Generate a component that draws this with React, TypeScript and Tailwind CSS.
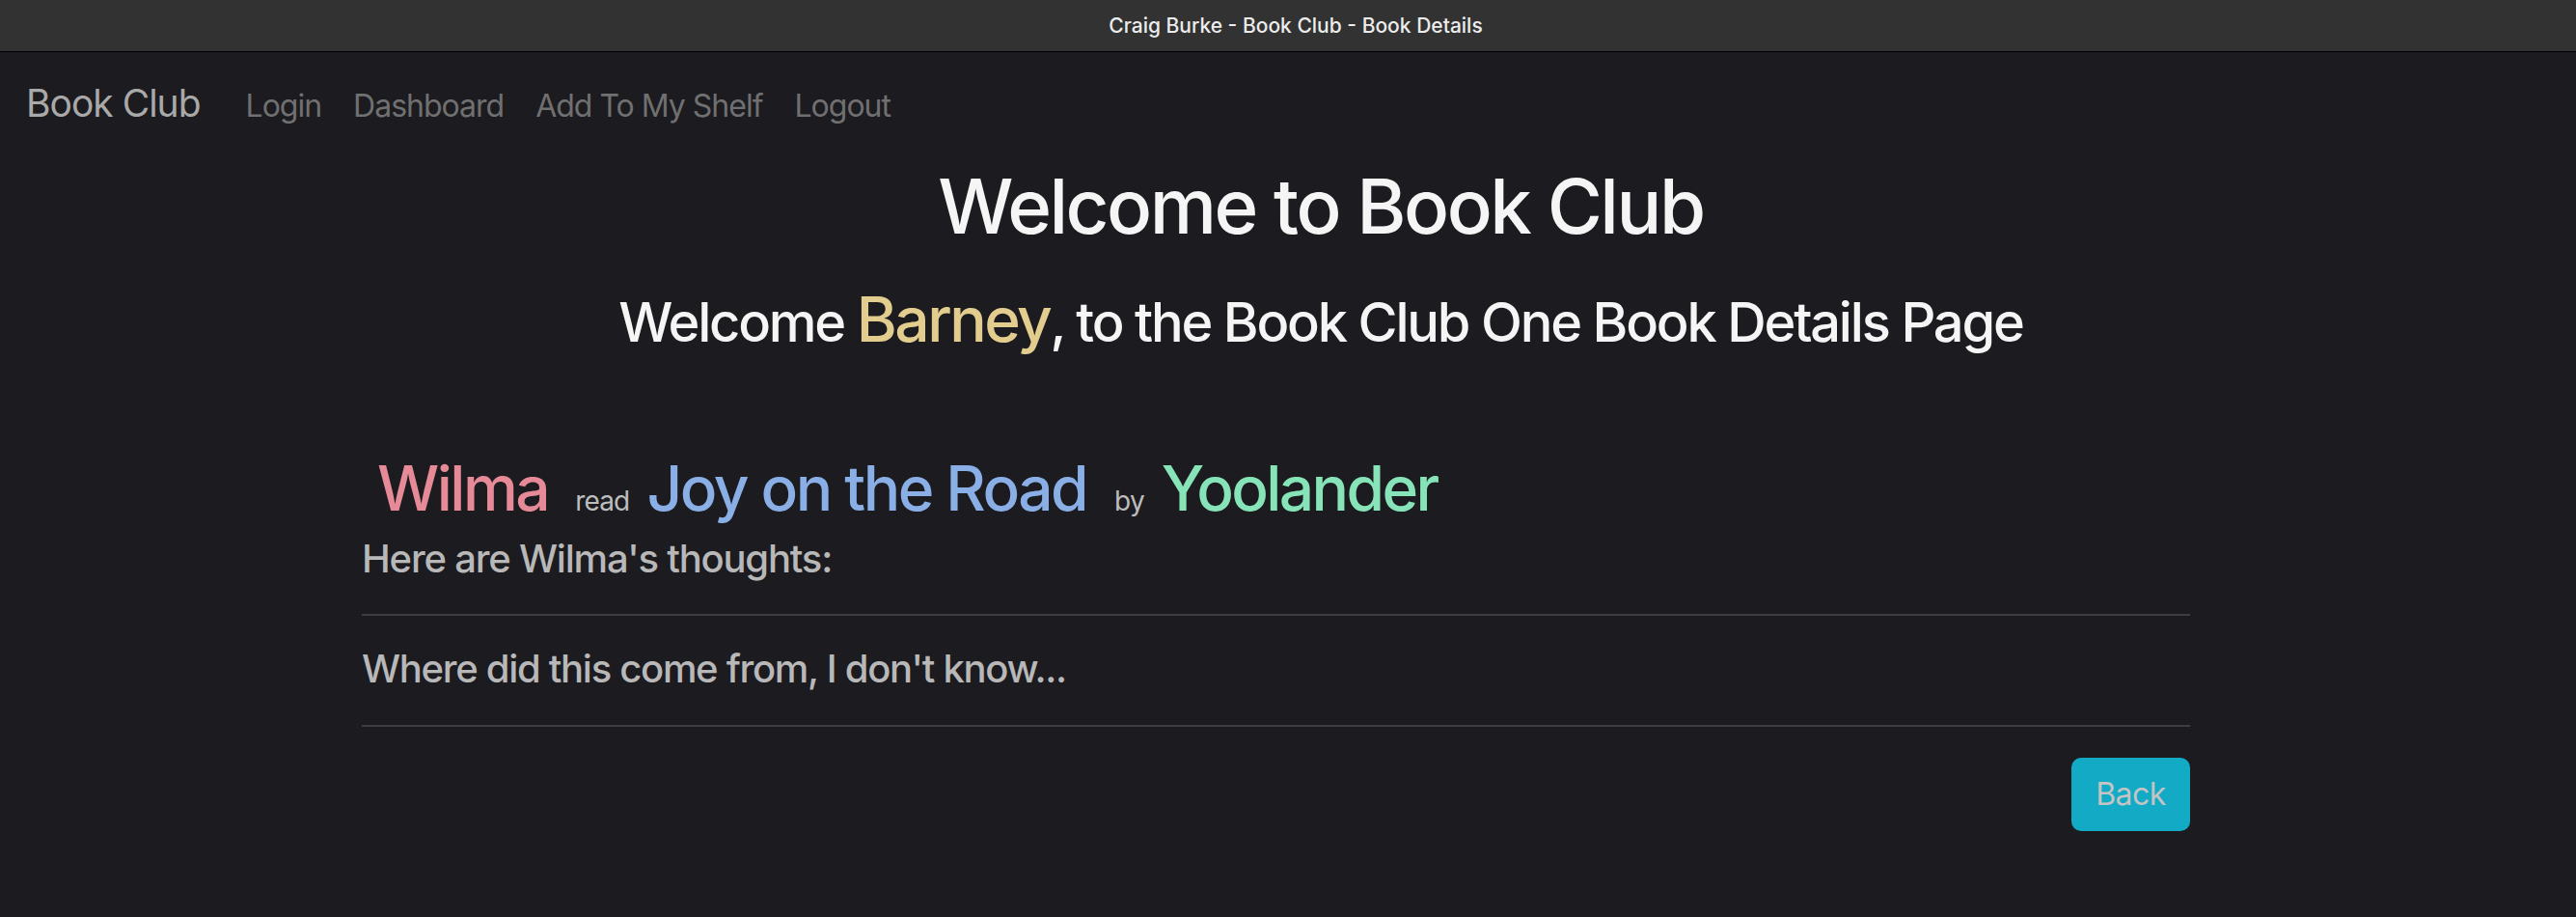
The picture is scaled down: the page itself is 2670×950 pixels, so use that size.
export default function App() {
  const links = ["Login", "Dashboard", "Add To My Shelf", "Logout"];
  return (
    <div className="min-h-[950px] bg-[#1c1b20] font-['Inter',sans-serif]">
      {/* window title bar */}
      <div className="h-[54px] bg-[#323232] border-b border-black flex items-center justify-center">
        <span className="pl-[16px] text-[21px] font-medium text-[#ececec]">
          Craig Burke - Book Club - Book Details
        </span>
      </div>

      {/* navbar */}
      <nav className="flex items-baseline pl-[27px] pt-[24px] h-[78px]">
        <span className="text-[39px] text-[#a9a9a9] mr-[47px] tracking-[-1px]">Book Club</span>
        <div className="flex items-baseline gap-[33px]">
          {links.map((l) => (
            <a key={l} className="text-[32px] text-[#707070] tracking-[-1px]">
              {l}
            </a>
          ))}
        </div>
      </nav>

      {/* header */}
      <div className="pl-[68px] pt-[34px] text-center">
        <h1 className="text-[78px] leading-[96px] text-[#f5f5f5] font-medium tracking-[-2.5px]">
          Welcome to Book Club
        </h1>
        <h3 className="mt-[35px] text-[56px] leading-[67px] text-[#f5f5f5] font-medium tracking-[-2.2px]">
          Welcome <span className="text-[64px] text-[#e3cd8e] tracking-[-2.5px]">Barney</span>, to the Book Club One Book
          Details Page
        </h3>
      </div>

      {/* review */}
      <div className="ml-[375px] w-[1895px] mt-[100px]">
        <div className="flex items-baseline pl-[16px]">
          <span className="text-[64px] leading-[76px] text-[#e58a96] font-medium tracking-[-2.5px]">Wilma</span>
          <span className="ml-[28px] text-[28px] text-[#bdbdbd] tracking-[-0.8px]">read</span>
          <span className="ml-[18px] text-[64px] leading-[76px] text-[#8aaee6] font-medium tracking-[-2.5px]">
            Joy on the Road
          </span>
          <span className="ml-[29px] text-[28px] text-[#bdbdbd] tracking-[-0.8px]">by</span>
          <span className="ml-[18px] text-[64px] leading-[76px] text-[#86e4b8] font-medium tracking-[-2.6px]">
            Yoolander
          </span>
        </div>
        <p className="mt-[11px] text-[40px] leading-[48px] text-[#b8b8b8] font-medium tracking-[-1.2px]">
          Here are Wilma's thoughts:
        </p>
        <div className="mt-[33px] border-t-2 border-[#3c3c42]" />
        <p className="pt-[31px] pb-[34px] text-[40px] leading-[48px] text-[#b8b8b8] font-medium tracking-[-1.3px]">
          Where did this come from, I don't know...
        </p>
        <div className="border-t-2 border-[#3c3c42]" />
        <div className="flex justify-end mt-[32px]">
          <button className="w-[123px] h-[76px] rounded-[10px] bg-[#12aac5] text-[32px] text-[#c4c4c4] tracking-[-0.5px]">
            Back
          </button>
        </div>
      </div>
    </div>
  );
}
